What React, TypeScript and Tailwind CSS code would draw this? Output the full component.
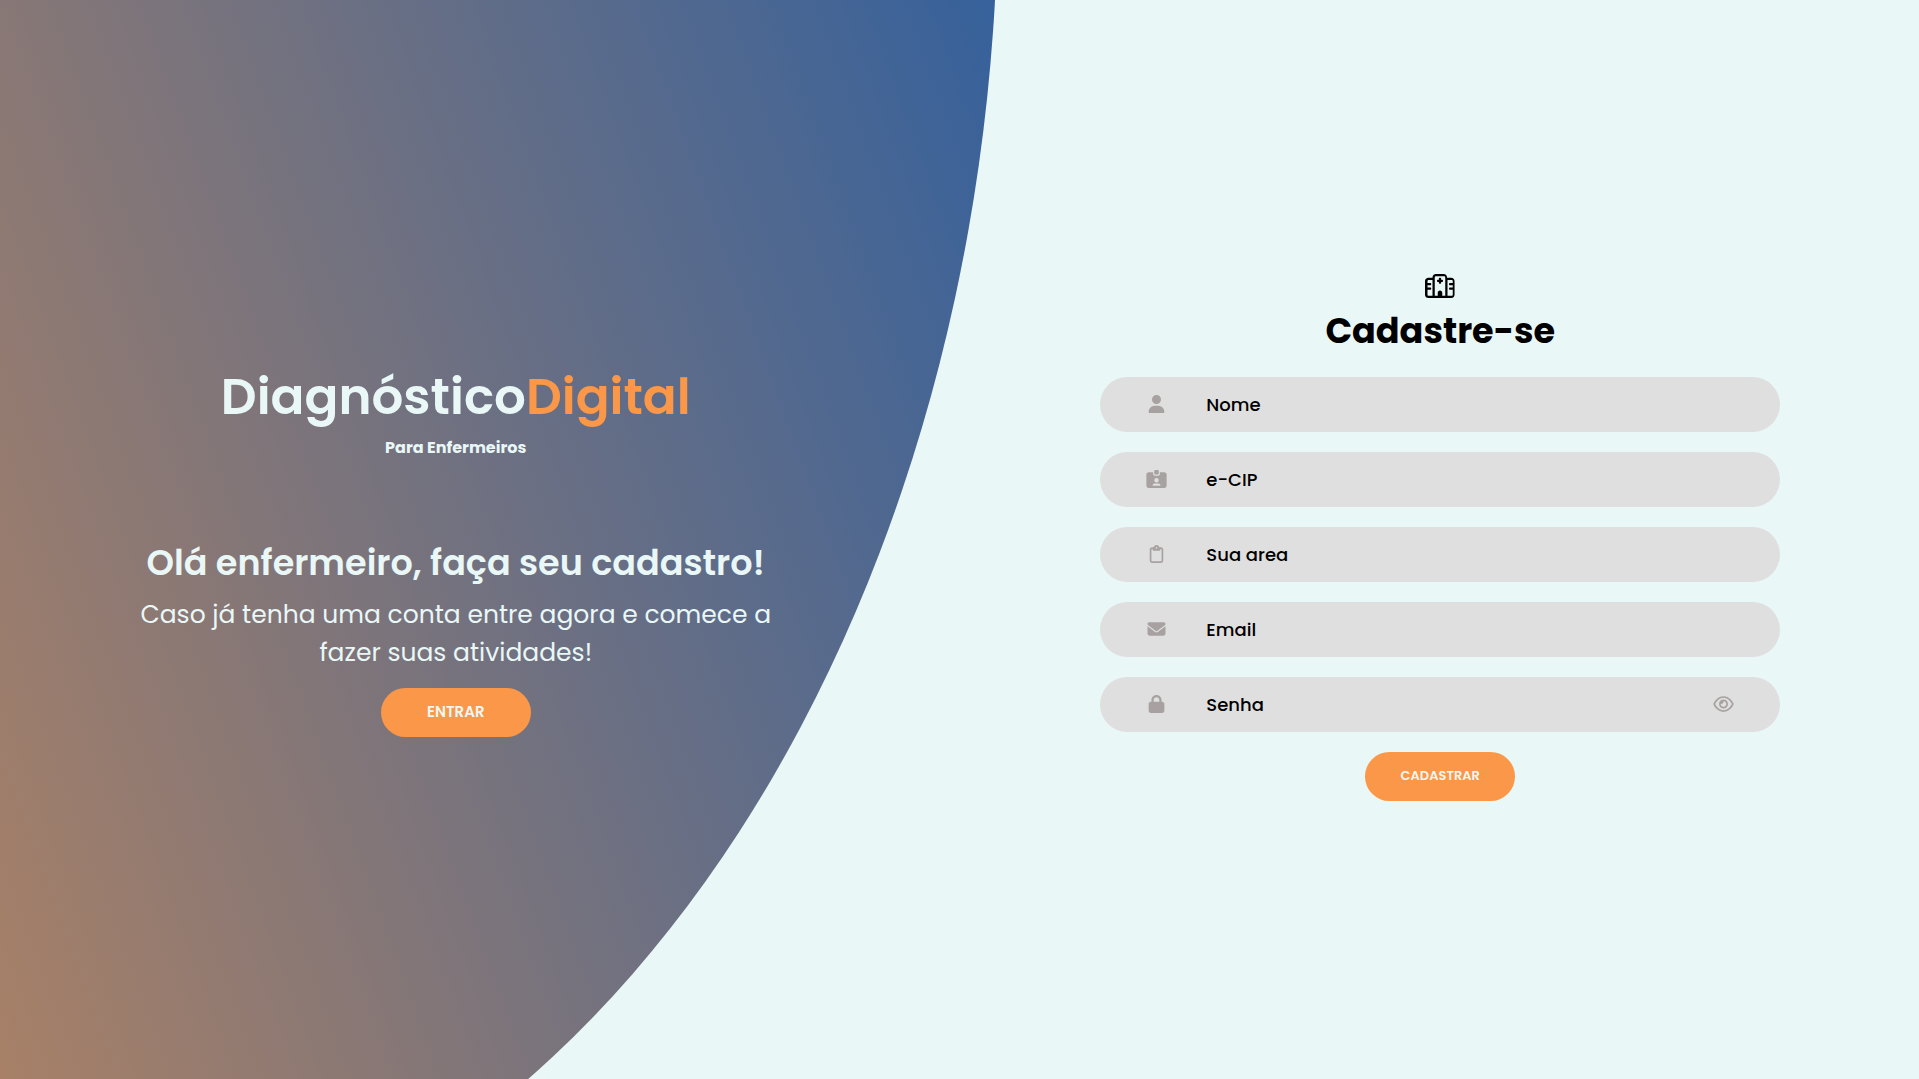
import { useState } from "react";
import type { IconType } from "react-icons";
import {
  FaEnvelope,
  FaIdCardClip,
  FaLock,
  FaRegClipboard,
  FaRegEye,
  FaRegHospital,
  FaUser,
} from "react-icons/fa6";

type Field = { id: string; label: string; type: string; icon: IconType };

const fields: Field[] = [
  { id: "nome", label: "Nome", type: "text", icon: FaUser },
  { id: "ecip", label: "e-CIP", type: "text", icon: FaIdCardClip },
  { id: "area", label: "Sua area", type: "text", icon: FaRegClipboard },
  { id: "email", label: "Email", type: "email", icon: FaEnvelope },
  { id: "senha", label: "Senha", type: "password", icon: FaLock },
];

const buttonStyle =
  "h-[49px] w-[150px] rounded-full bg-[#fb9748] font-semibold uppercase text-[#e9f7f6]";

function FormField({ field }: { field: Field }) {
  const [visible, setVisible] = useState(false);
  const Icon = field.icon;
  const isPassword = field.type === "password";
  return (
    <div className="flex h-[55px] w-full items-center rounded-full bg-[#dfdfdf] pr-[46px] text-[#a7a2a1]">
      <label htmlFor={field.id} className="flex w-[106px] shrink-0 justify-center pl-[7px]">
        <Icon className="h-[18px] w-[21px]" />
      </label>
      <input
        id={field.id}
        aria-label={field.label}
        type={isPassword && visible ? "text" : field.type}
        placeholder={field.label}
        className="h-full min-w-0 flex-1 bg-transparent text-[18px] font-medium text-black outline-none placeholder:text-black"
      />
      {isPassword && (
        <button type="button" aria-label="Mostrar senha" onClick={() => setVisible(!visible)}>
          <FaRegEye className="h-[18px] w-[21px]" />
        </button>
      )}
    </div>
  );
}

export default function App() {
  return (
    <main className="relative grid min-h-screen grid-cols-2 overflow-hidden bg-[#e9f7f6] font-['Poppins','Inter',sans-serif]">
      <div className="absolute right-[48%] top-[-10%] h-[2800px] w-[2000px] -translate-y-1/2 rounded-[50%] bg-[linear-gradient(70deg,#ff983e,#0a55b0)]" />

      <section className="relative flex flex-col items-center justify-center pr-12 pt-4 text-center text-[#e9f7f6]">
        <h1 className="text-[50px] font-semibold leading-[75px]">
          Diagnóstico<span className="text-[#fb9748]">Digital</span>
        </h1>
        <p className="mt-0.5 text-[16px] font-bold leading-6">Para Enfermeiros</p>
        <h2 className="mt-[76px] text-[35px] font-semibold leading-[54px]">
          Olá enfermeiro, faça seu cadastro!
        </h2>
        <p className="mt-1.5 max-w-[640px] text-[25px] leading-[38px]">
          Caso já tenha uma conta entre agora e comece a fazer suas atividades!
        </p>
        <button type="button" className={`${buttonStyle} mt-4 text-[15px]`}>
          Entrar
        </button>
      </section>

      <section className="relative flex items-center justify-center pb-[5px] pl-0.5">
        <form
          className="flex w-[71%] flex-col items-center"
          onSubmit={(event) => event.preventDefault()}
        >
          <FaRegHospital className="h-6 w-[30px]" />
          <h2 className="mb-[19px] mt-[6px] text-[35px] font-bold leading-[54px]">Cadastre-se</h2>
          <div className="flex w-full flex-col gap-5">
            {fields.map((field) => (
              <FormField key={field.id} field={field} />
            ))}
          </div>
          <button type="submit" className={`${buttonStyle} mt-5 text-[13px]`}>
            Cadastrar
          </button>
        </form>
      </section>
    </main>
  );
}
